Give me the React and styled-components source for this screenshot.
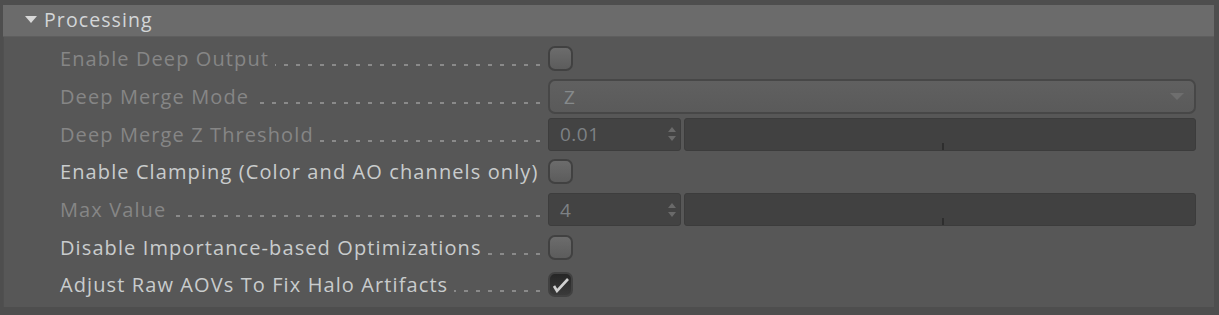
import React from "react";
import styled, { createGlobalStyle } from "styled-components";

const GlobalStyle = createGlobalStyle`
  html, body {
    margin: 0;
    padding: 0;
    background: #4e4e4e;
  }
  body {
    font-family: "Open Sans", "Noto Sans", sans-serif;
  }
`;

const rows = [
  { label: "Enable Deep Output", type: "check", disabled: true },
  { label: "Deep Merge Mode", type: "select", value: "Z", disabled: true },
  { label: "Deep Merge Z Threshold", type: "slider", value: "0.01", disabled: true },
  { label: "Enable Clamping (Color and AO channels only)", type: "check", noLeader: true },
  { label: "Max Value", type: "slider", value: "4", disabled: true },
  { label: "Disable Importance-based Optimizations", type: "check" },
  { label: "Adjust Raw AOVs To Fix Halo Artifacts", type: "check", checked: true },
];

const App = () => {
  return (
    <>
      <GlobalStyle />
      <Page>
        <Header>
          <Caret viewBox="0 0 12 10">
            <path d="M0 0 H12 L6 7 Z" fill="#d8d8d8" />
          </Caret>
          <span>Processing</span>
        </Header>
        <Panel>
          {rows.map((row) => (
            <Row key={row.label}>
              <LabelCell>
                <Label $disabled={row.disabled}>{row.label}</Label>
                {!row.noLeader && <Leader />}
              </LabelCell>
              {row.type === "check" && <Checkbox $checked={row.checked}>{row.checked && <CheckMark />}</Checkbox>}
              {row.type === "select" && (
                <Select>
                  <span>{row.value}</span>
                  <svg width="14" height="8" viewBox="0 0 14 8">
                    <path d="M0 0 H14 L7 7 Z" fill="#6e6e6e" />
                  </svg>
                </Select>
              )}
              {row.type === "slider" && (
                <SliderGroup>
                  <NumberField>
                    <span>{row.value}</span>
                    <svg width="8" height="14" viewBox="0 0 8 14">
                      <path d="M4 0 L8 5 H0 Z M4 14 L8 9 H0 Z" fill="#6a6a6a" />
                    </svg>
                  </NumberField>
                  <Track>
                    <Tick />
                  </Track>
                </SliderGroup>
              )}
            </Row>
          ))}
        </Panel>
      </Page>
    </>
  );
};

// check drawn like the slanted ✔ of the reference
const CheckMark = () => (
  <svg width="18" height="16" viewBox="0 0 18 16">
    <path d="M2 9 L5 14 L16 2" stroke="#d0d0d0" strokeWidth="2.6" fill="none" strokeLinejoin="miter" />
  </svg>
);

const Page = styled.div`
  padding: 5px 5px 8px 3px;
  height: 315px;
  box-sizing: border-box;
  display: flex;
  flex-direction: column;
`;

const Header = styled.div`
  height: 31px;
  background: #6b6b6b;
  display: flex;
  align-items: center;
  padding-left: 22px;
  color: #d3d6d8;
  font-size: 19.5px;
  letter-spacing: 1.1px;
  border-bottom: 1px solid #5e5e5e;
  span {
    margin-left: 7px;
    margin-top: -2px;
  }
`;

const Caret = styled.svg`
  width: 12px;
  height: 10px;
`;

const Panel = styled.div`
  flex: 1;
  background: #575757;
  border-left: 1px solid #505050;
  padding: 3px 0 0 56px;
`;

const Row = styled.div`
  height: 37.7px;
  display: flex;
  align-items: center;
`;

const LabelCell = styled.div`
  width: 488px;
  display: flex;
  align-items: baseline;
  padding-right: 8px;
  box-sizing: border-box;
`;

const Label = styled.span`
  font-size: 20px;
  letter-spacing: 1.1px;
  color: ${(p) => (p.$disabled ? "#868686" : "#c9cccd")};
  white-space: nowrap;
`;

const Leader = styled.div`
  flex: 1;
  height: 2px;
  margin-left: 6px;
  background: repeating-linear-gradient(to left, #8a8a8a 0 4px, transparent 4px 12px);
`;

const Checkbox = styled.div`
  width: 25px;
  height: 25px;
  box-sizing: border-box;
  border-radius: 7px;
  border: 2px solid #414141;
  background: ${(p) =>
    p.$checked
      ? "linear-gradient(#262626, #3a3a3a)"
      : "linear-gradient(#6c6c6c, #5c5c5c)"};
  display: flex;
  align-items: center;
  justify-content: center;
`;

const Select = styled.div`
  width: 648px;
  height: 35px;
  box-sizing: border-box;
  border: 2px solid #474747;
  border-radius: 7px;
  background: linear-gradient(#606060, #5a5a5a);
  display: flex;
  align-items: center;
  justify-content: space-between;
  padding: 0 10px 0 14px;
  font-size: 19px;
  color: #868a8c;
`;

const SliderGroup = styled.div`
  display: flex;
  gap: 3px;
  height: 33px;
`;

const NumberField = styled.div`
  width: 133px;
  box-sizing: border-box;
  background: #434343;
  border: 1px solid #3d3d3d;
  border-radius: 3px;
  display: flex;
  align-items: center;
  justify-content: space-between;
  padding: 0 4px 0 11px;
  font-size: 19px;
  letter-spacing: 0.5px;
  color: #7d8185;
`;

const Track = styled.div`
  width: 512px;
  box-sizing: border-box;
  background: #414141;
  border: 1px solid #3c3c3c;
  border-radius: 3px;
  display: flex;
  align-items: flex-end;
  padding-left: 257px;
`;

const Tick = styled.div`
  width: 2px;
  height: 7px;
  background: #2e2e2e;
`;

export default App;
